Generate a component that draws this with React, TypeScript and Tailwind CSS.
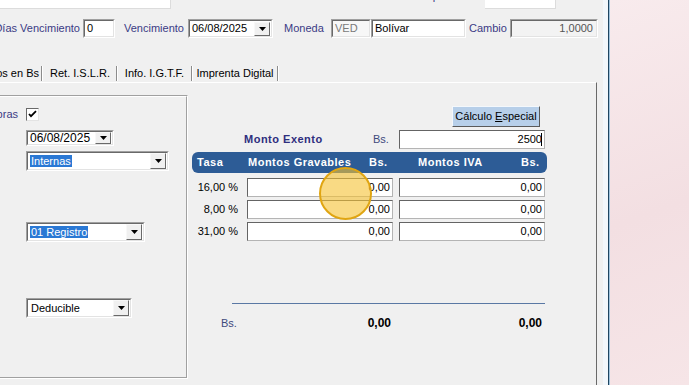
import React from "react";

type BoxProps = { className?: string; inner?: string; children?: React.ReactNode };

// classic 3D sunken edit box
const Sunken = ({ className = "", inner = "bg-white", children }: BoxProps) => (
  <div className={`border border-t-[#a0a0a0] border-l-[#a0a0a0] border-b-white border-r-white ${className}`}>
    <div className={`flex h-full w-full items-center border border-t-[#696969] border-l-[#696969] border-b-[#e3e3e3] border-r-[#e3e3e3] ${inner}`}>
      {children}
    </div>
  </div>
);

const DropBtn = ({ className = "" }: { className?: string }) => (
  <div className={`flex items-center justify-center border border-t-[#f8f8f8] border-l-[#f8f8f8] border-b-[#696969] border-r-[#696969] bg-[#f0f0f0] ${className}`}>
    <svg width="7" height="4" viewBox="0 0 7 4">
      <path d="M0 0h7L3.5 4z" fill="#000" />
    </svg>
  </div>
);

const Field = ({ value }: { value: string }) => (
  <div className="flex h-[19px] w-[146px] items-center justify-end border border-t-[#646464] border-l-[#646464] border-b-[#b4b4b4] border-r-[#b4b4b4] bg-white pr-[2px] text-black">
    {value}
  </div>
);

const Sep = () => (
  <div className="flex h-[15px]">
    <div className="w-px bg-[#8c8c8c]" />
    <div className="w-px bg-white" />
  </div>
);

const rows = ["16,00 %", "8,00 %", "31,00 %"];

const App = () => {
  return (
    <div className="flex h-[385px] w-[689px] overflow-hidden font-['Liberation_Sans',Arial,sans-serif] text-[11px] leading-[13px]">
      {/* Window */}
      <div className="relative flex h-full w-[603px] shrink-0 flex-col bg-[#f0f0f0]">
        {/* top row (cut off) */}
        <div className="flex h-[9px] shrink-0 items-end">
          <div className="h-[20px] w-[171px] border-b border-r border-b-[#dcdcdc] border-r-[#dcdcdc] bg-white" />
          <div className="mb-[6px] flex w-[302px] justify-end whitespace-nowrap text-[#3b3b85]">Nº Proposición</div>
          <div className="ml-[12px] h-[20px] w-[71px] border-b border-r border-b-[#dcdcdc] border-r-[#dcdcdc] bg-white" />
        </div>

        {/* vencimiento / moneda row */}
        <div className="mt-[10px] flex h-[19px] shrink-0 items-center">
          <div className="flex w-[80px] justify-end whitespace-nowrap text-[#3b3b85]">Días Vencimiento</div>
          <Sunken className="ml-[3px] h-[19px] w-[32px]">
            <span className="pl-[2px]">0</span>
          </Sunken>
          <div className="ml-[9px] w-[64px] text-[#3b3b85]">Vencimiento</div>
          <Sunken className="h-[19px] w-[85px]">
            <span className="flex-1 pl-[2px]">06/08/2025</span>
            <DropBtn className="mr-px h-[14px] w-[16px]" />
          </Sunken>
          <div className="w-[58px] pl-[11px] text-[#3b3b85]">Moneda</div>
          <Sunken className="h-[19px] w-[40px]" inner="bg-[#f7f7f7]">
            <span className="pl-[2px] text-[#7a7a7a]">VED</span>
          </Sunken>
          <Sunken className="h-[19px] w-[95px]">
            <span className="pl-[2px]">Bolívar</span>
          </Sunken>
          <div className="w-[44px] pl-[3px] text-[#3b3b85]">Cambio</div>
          <Sunken className="h-[19px] w-[88px]" inner="bg-[#f3f3f3] justify-end">
            <span className="pr-[3px] text-[#555]">1,0000</span>
          </Sunken>
        </div>

        {/* tabs */}
        <div className="mt-[26px] flex h-[18px] shrink-0 items-center whitespace-nowrap">
          <div className="flex w-[41px] justify-end pr-[2px]">Montos en Bs</div>
          <Sep />
          <div className="flex w-[73px] justify-center pl-px">Ret. I.S.L.R.</div>
          <Sep />
          <div className="flex w-[73px] justify-center">Info. I.G.T.F.</div>
          <Sep />
          <div className="flex w-[84px] justify-center">Imprenta Digital</div>
          <Sep />
        </div>

        {/* tab page */}
        <div className="flex w-[597px] flex-1 items-start border-t border-r border-t-white border-r-[#696969]">
          {/* group box */}
          <div className="mt-[12px] h-[284px] w-[188px] shrink-0 border-t border-r border-b border-t-[#a0a0a0] border-r-white border-b-white">
            <div className="flex h-full flex-col border-t border-r border-b border-t-white border-r-[#a0a0a0] border-b-[#a0a0a0]">
              <div className="mt-[11px] flex h-[13px] items-center">
                <div className="flex w-[18px] justify-end whitespace-nowrap text-[#3b3b85]">Compras</div>
                <div className="ml-[8px] flex h-[13px] w-[13px] items-center justify-center border border-t-[#696969] border-l-[#696969] border-b-[#e3e3e3] border-r-[#e3e3e3] bg-white">
                  <svg width="9" height="9" viewBox="0 0 9 9">
                    <path d="M1 4l2 2.2L8 1.2" stroke="#000" strokeWidth="1.8" fill="none" />
                  </svg>
                </div>
              </div>
              <Sunken className="ml-[26px] mt-[9px] h-[16px] w-[88px]">
                <span className="flex-1 pl-[2px] text-[12px]">06/08/2025</span>
                <DropBtn className="mr-px h-[12px] w-[16px]" />
              </Sunken>
              <Sunken className="ml-[26px] mt-[5px] h-[20px] w-[143px]">
                <span className="ml-[2px] flex-1">
                  <span className="bg-[#2a78d4] px-px text-white">Internas</span>
                </span>
                <DropBtn className="mr-px h-[16px] w-[16px]" />
              </Sunken>
              <Sunken className="ml-[26px] mt-[51px] h-[20px] w-[119px]">
                <span className="ml-[2px] flex-1">
                  <span className="bg-[#2a78d4] px-px text-white">01 Registro</span>
                </span>
                <DropBtn className="mr-px h-[16px] w-[16px]" />
              </Sunken>
              <Sunken className="ml-[26px] mt-[56px] h-[20px] w-[106px]">
                <span className="flex-1 pl-[3px]">Deducible</span>
                <DropBtn className="mr-px h-[16px] w-[16px]" />
              </Sunken>
            </div>
          </div>

          {/* montos */}
          <div className="flex flex-col">
            <div className="ml-[264px] mt-[23px] flex h-[21px] w-[88px] items-center justify-center border border-t-[#f4f8fc] border-l-[#f4f8fc] border-b-[#5a5a5a] border-r-[#5a5a5a] bg-[#b7cfe9] text-black">
              Cálculo <span className="ml-[3px] underline">E</span>special
            </div>

            <div className="mt-[3px] flex h-[19px] items-center">
              <div className="ml-[56px] w-[129px] font-bold tracking-[0.5px] text-[#2e2e7e]">Monto Exento</div>
              <div className="w-[26px] text-[#3e4a7c]">Bs.</div>
              <div className="flex h-[19px] w-[146px] items-center justify-end border border-t-[#646464] border-l-[#646464] border-b-[#b4b4b4] border-r-[#b4b4b4] bg-white pr-[2px]">
                2500
                <span className="-ml-[1px] h-[13px] w-px bg-black" />
              </div>
            </div>

            <div className="ml-[4px] mt-[3px] flex h-[21px] w-[355px] items-center rounded-[6px] bg-[#2d5c96] font-bold tracking-[0.5px] text-white">
              <div className="w-[56px] pl-[5px]">Tasa</div>
              <div className="w-[121px]">Montos Gravables</div>
              <div className="w-[49px]">Bs.</div>
              <div className="w-[103px]">Montos IVA</div>
              <div>Bs.</div>
            </div>

            <div className="mt-[5px] flex flex-col gap-[3px]">
              {rows.map((tasa) => (
                <div key={tasa} className="flex h-[19px] items-center">
                  <div className="w-[50px] text-right">{tasa}</div>
                  <div className="ml-[9px]">
                    <Field value="0,00" />
                  </div>
                  <div className="ml-[6px]">
                    <Field value="0,00" />
                  </div>
                </div>
              ))}
            </div>

            <div className="ml-[44px] mt-[62px] h-px w-[313px] bg-[#5a78a4]" />

            <div className="mt-[12px] flex h-[14px] items-center">
              <div className="w-[59px] pl-[33px] text-[#3e4a7c]">Bs.</div>
              <div className="w-[145px] pr-px text-right text-[12px] font-bold">0,00</div>
              <div className="ml-[6px] w-[146px] pr-[2px] text-right text-[12px] font-bold">0,00</div>
            </div>
          </div>
        </div>

        {/* cursor highlight */}
        <div className="absolute left-[319px] top-[167px] h-[53px] w-[53px] rounded-full border-2 border-[#e0a512] bg-[#f5c232]/60" />
      </div>

      {/* window frame edge */}
      <div className="w-[5px] shrink-0 bg-[#f3f7fb]" />
      <div className="w-px shrink-0 bg-[#1f4560]" />
      <div className="w-px shrink-0 bg-[#9ec3de]" />

      {/* desktop */}
      <div className="flex-1 bg-[linear-gradient(160deg,#f8ebed_0%,#f3dfe2_55%,#f6e5e7_100%)]" />
    </div>
  );
};

export default App;
